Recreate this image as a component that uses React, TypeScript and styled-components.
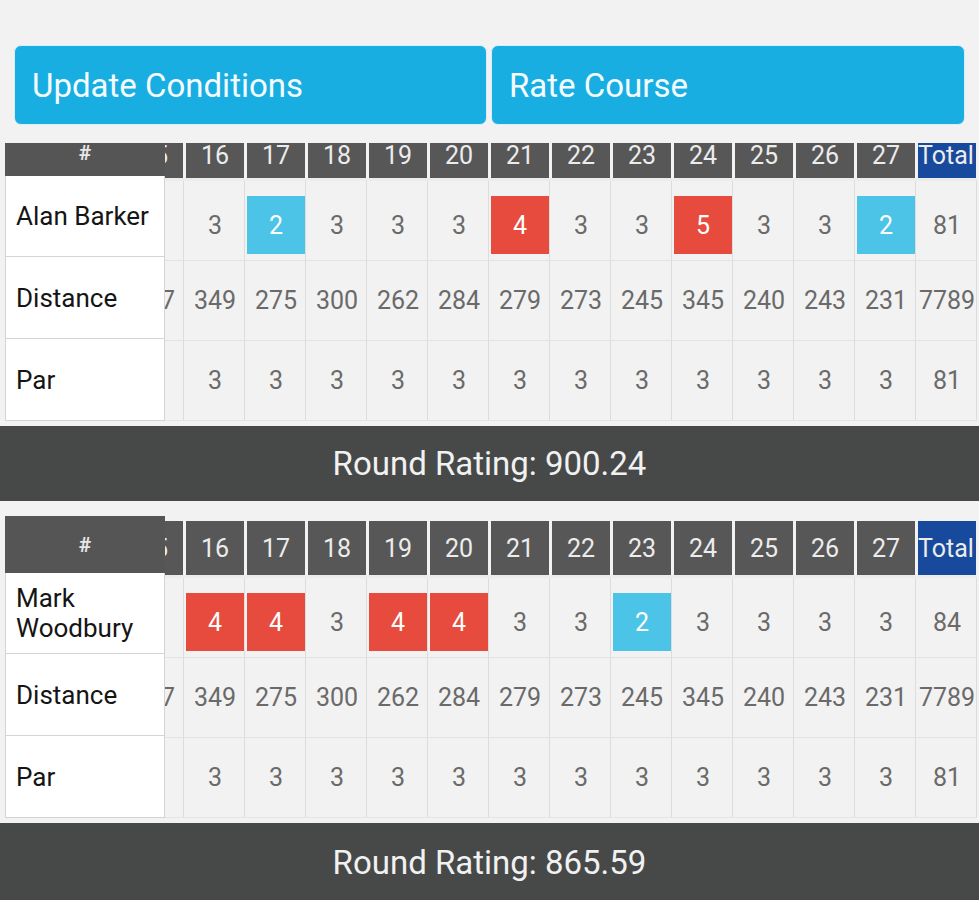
import styled, { createGlobalStyle } from "styled-components";

const GlobalStyle = createGlobalStyle`
  body {
    margin: 0;
    background: #f2f2f2;
    font-family: Roboto, "Liberation Sans", sans-serif;
  }
`;

const Page = styled.div`
  width: 979px;
  height: 900px;
  overflow: hidden;
`;

const ButtonBar = styled.div`
  display: grid;
  grid-template-columns: 473px 474px;
  gap: 4px;
  padding: 45px 0 0 14px;
`;

const ActionButton = styled.button`
  height: 80px;
  border: 1px solid #d8eef6;
  border-radius: 7px;
  background: #18aee2;
  color: #f4fbff;
  font-family: Roboto, sans-serif;
  font-size: 33px;
  text-align: left;
  padding: 0 0 0 17px;
`;

const Card = styled.div<{ $top: number }>`
  display: flex;
  margin-top: ${({ $top }) => $top}px;
`;

const NameColumn = styled.div`
  width: 160px;
  margin-left: 5px;
  flex: none;
  display: flex;
  flex-direction: column;
`;

const NameHeader = styled.div<{ $height: number; $cut?: boolean }>`
  height: ${({ $height }) => $height}px;
  background: #555;
  color: #e6e6e6;
  font-weight: 700;
  font-size: 21px;
  display: flex;
  justify-content: center;
  align-items: ${({ $cut }) => ($cut ? "flex-start" : "center")};
  line-height: ${({ $cut }) => ($cut ? "20px" : "normal")};
`;

const NameCell = styled.div<{ $height: number }>`
  height: ${({ $height }) => $height}px;
  box-sizing: border-box;
  background: #fff;
  border: 1px solid #d4d4d4;
  border-top: none;
  padding: 0 4px 0 10px;
  display: flex;
  align-items: center;
  font-size: 26px;
  line-height: 30px;
  color: #151515;
`;

const Viewport = styled.div`
  flex: 1;
  overflow: hidden;
`;

const Track = styled.div`
  margin-left: -42px;
  width: max-content;
`;

const HeaderRow = styled.div<{ $height: number; $top: number; $cut?: boolean }>`
  display: flex;
  gap: 3px;
  padding: ${({ $top }) => $top}px 0 0 2px;
  border-bottom: 3px solid #ececec;
  & > div {
    height: ${({ $height }) => $height}px;
    align-items: ${({ $cut }) => ($cut ? "flex-start" : "center")};
    line-height: ${({ $cut }) => ($cut ? "26px" : "normal")};
  }
`;

const HeaderCell = styled.div<{ $total?: boolean }>`
  width: 58px;
  flex: none;
  overflow: hidden;
  background: ${({ $total }) => ($total ? "#174a9d" : "#575757")};
  color: #ececec;
  font-size: 25px;
  display: flex;
  justify-content: ${({ $total }) => ($total ? "flex-start" : "center")};
  white-space: nowrap;
`;

const Row = styled.div<{ $height: number; $score?: boolean }>`
  display: flex;
  height: ${({ $height }) => $height}px;
  box-sizing: border-box;
  border-bottom: 1px solid #e3e3e3;
  & > div {
    align-items: ${({ $score }) => ($score ? "flex-end" : "center")};
    padding-bottom: ${({ $score }) => ($score ? "6px" : "0")};
  }
`;

const Cell = styled.div`
  width: 61px;
  flex: none;
  box-sizing: border-box;
  border-right: 1px solid #dcdcdc;
  padding-left: 2px;
  display: flex;
  justify-content: center;
  color: #6a6a6a;
  font-size: 25px;
  white-space: nowrap;
`;

const ScoreBox = styled.div<{ $kind: "par" | "over" | "under" }>`
  width: 58px;
  height: 58px;
  display: flex;
  align-items: center;
  justify-content: center;
  background: ${({ $kind }) =>
    $kind === "over" ? "#e64b3e" : $kind === "under" ? "#4bc4e8" : "transparent"};
  color: ${({ $kind }) => ($kind === "par" ? "#6a6a6a" : "#fdfdfd")};
`;

const RatingBar = styled.div<{ $height: number }>`
  margin-top: 5px;
  height: ${({ $height }) => $height}px;
  background: #474949;
  color: #f1f1f1;
  font-size: 33px;
  display: flex;
  align-items: center;
  justify-content: center;
`;

const holes = [15, 16, 17, 18, 19, 20, 21, 22, 23, 24, 25, 26, 27];
const distances = [317, 349, 275, 300, 262, 284, 279, 273, 245, 345, 240, 243, 231];
const pars = holes.map(() => 3);

type Player = { name: string; scores: number[]; total: number; rating: string };

const players: Player[] = [
  {
    name: "Alan Barker",
    scores: [3, 3, 2, 3, 3, 3, 4, 3, 3, 5, 3, 3, 2],
    total: 81,
    rating: "900.24",
  },
  {
    name: "Mark Woodbury",
    scores: [3, 4, 4, 3, 4, 4, 3, 3, 2, 3, 3, 3, 3],
    total: 84,
    rating: "865.59",
  },
];

const kindOf = (score: number, par: number) =>
  score > par ? "over" : score < par ? "under" : "par";

function Scorecard({ player, first }: { player: Player; first: boolean }) {
  return (
    <>
      <Card $top={first ? 18 : 15}>
        <NameColumn>
          <NameHeader $height={first ? 33 : 57} $cut={first}>
            #
          </NameHeader>
          <NameCell $height={81}>{player.name}</NameCell>
          <NameCell $height={82}>Distance</NameCell>
          <NameCell $height={82}>Par</NameCell>
        </NameColumn>
        <Viewport>
          <Track>
            <HeaderRow $height={first ? 35 : 54} $top={first ? 0 : 5} $cut={first}>
              {holes.map((h) => (
                <HeaderCell key={h}>{h}</HeaderCell>
              ))}
              <HeaderCell $total>Total</HeaderCell>
            </HeaderRow>
            <Row $height={80} $score>
              {player.scores.map((s, i) => (
                <Cell key={holes[i]}>
                  <ScoreBox $kind={kindOf(s, pars[i])}>{s}</ScoreBox>
                </Cell>
              ))}
              <Cell>
                <ScoreBox $kind="par">{player.total}</ScoreBox>
              </Cell>
            </Row>
            <Row $height={80}>
              {distances.map((d, i) => (
                <Cell key={holes[i]}>{d}</Cell>
              ))}
              <Cell>7789</Cell>
            </Row>
            <Row $height={80}>
              {pars.map((p, i) => (
                <Cell key={holes[i]}>{p}</Cell>
              ))}
              <Cell>81</Cell>
            </Row>
          </Track>
        </Viewport>
      </Card>
      <RatingBar $height={first ? 75 : 78}>Round Rating: {player.rating}</RatingBar>
    </>
  );
}

export default function App() {
  return (
    <Page>
      <GlobalStyle />
      <ButtonBar>
        <ActionButton>Update Conditions</ActionButton>
        <ActionButton>Rate Course</ActionButton>
      </ButtonBar>
      {players.map((p, i) => (
        <Scorecard key={p.name} player={p} first={i === 0} />
      ))}
    </Page>
  );
}
